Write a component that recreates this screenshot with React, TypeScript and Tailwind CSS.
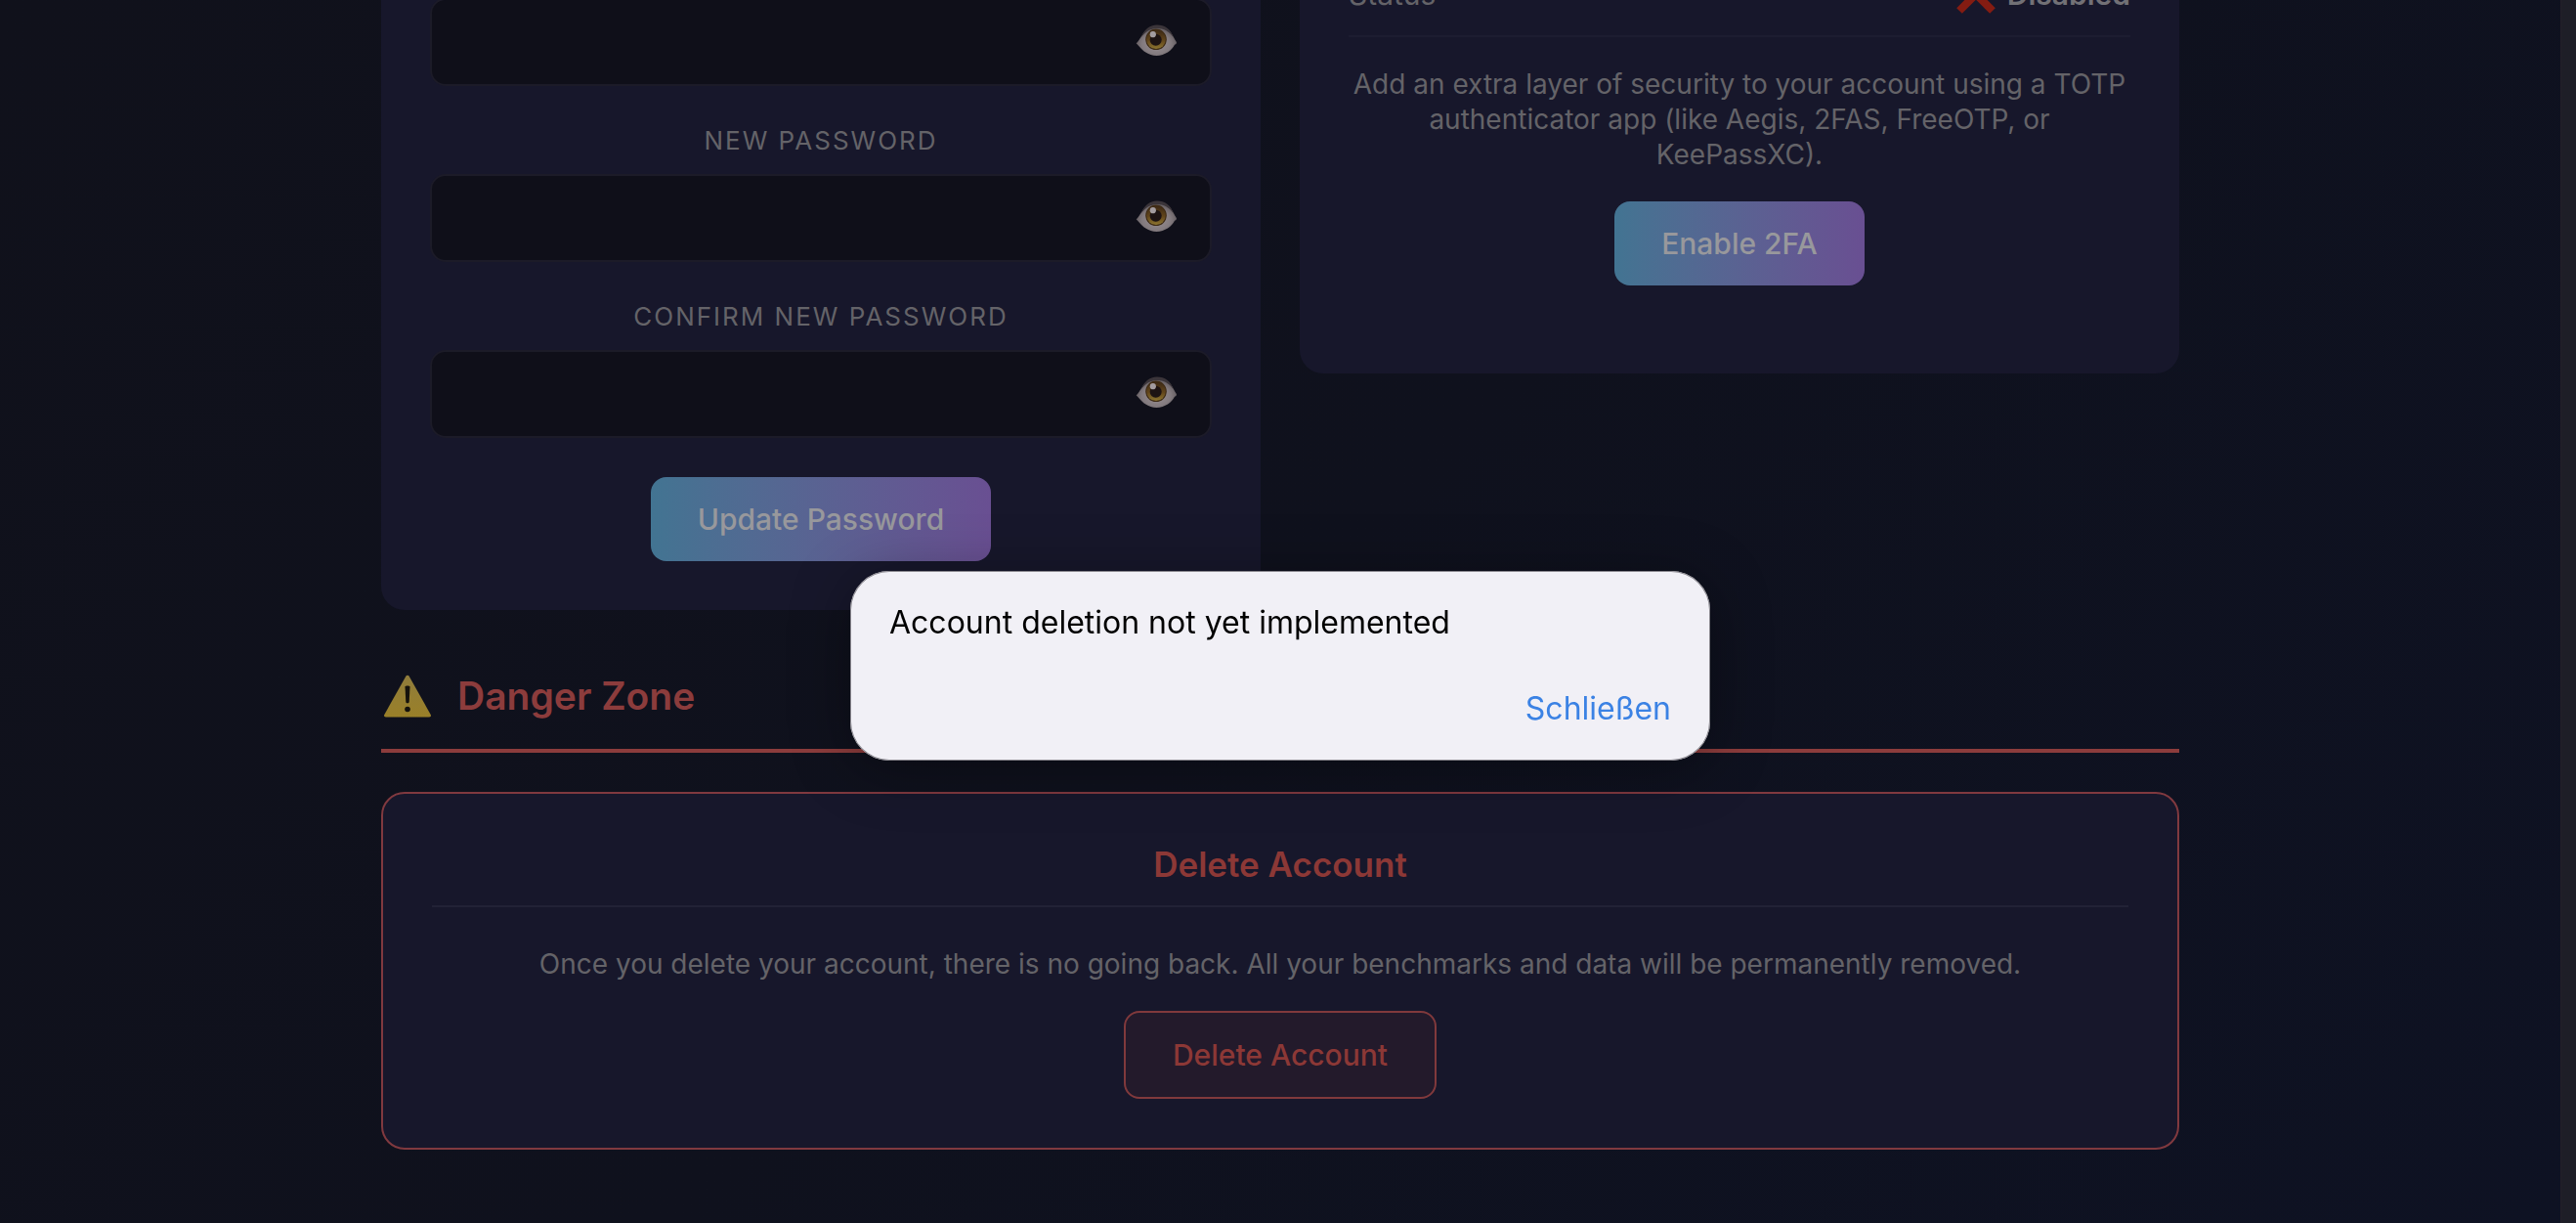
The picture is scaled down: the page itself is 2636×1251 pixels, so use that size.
import { useState } from "react";

const fields = [
  { id: "new_password", label: "New Password" },
  { id: "confirm_password", label: "Confirm New Password" },
];

function EyeIcon() {
  return (
    <svg viewBox="0 0 42 36" className="h-9 w-[42px]" aria-hidden="true">
      <defs>
        <radialGradient id="eyeWhite" cx="0.5" cy="0.6" r="0.55">
          <stop offset="0" stopColor="#9a9094" />
          <stop offset="0.65" stopColor="#827a7e" />
          <stop offset="1" stopColor="#5f585c" />
        </radialGradient>
        <linearGradient id="eyeIris" x1="0" y1="0" x2="0" y2="1">
          <stop offset="0" stopColor="#3c2814" />
          <stop offset="0.55" stopColor="#61451b" />
          <stop offset="1" stopColor="#8d7530" />
        </linearGradient>
      </defs>
      <path
        d="M.7 19.300C4 16.500 6 11 10 7 13.500 3.200 18 1.500 22 1.500c5 0 10 2 13 5.500 3 3.500 4.500 7.500 7 11.300L41.500 20l-1.500.7C37.500 26 30 32 21.500 32 13 32 7.500 27 3.500 22.300Z"
        fill="url(#eyeWhite)"
      />
      <path
        d="M5 14C9 5.500 14 .6 22 .6S36 5 39 13.500C34.500 7 29 4 22 4S10 7.500 5 14Z"
        fill="#3b353a"
      />
      <circle cx="21" cy="15.300" r="10.800" fill="#3f2c16" />
      <circle cx="21" cy="15.300" r="9.700" fill="url(#eyeIris)" />
      <circle cx="20.700" cy="15.700" r="6" fill="#1d1313" />
      <circle cx="17.800" cy="10.200" r="3.100" fill="#a39ca0" />
    </svg>
  );
}

function WarningIcon() {
  return (
    <svg viewBox="-2 0 54 44" className="h-11 w-[54px]" aria-hidden="true">
      <defs>
        <linearGradient id="warnFill" x1="0" y1="0" x2="0" y2="1">
          <stop offset="0" stopColor="#8f7c3c" />
          <stop offset="1" stopColor="#9a8028" />
        </linearGradient>
      </defs>
      <path
        d="M23.300 1.800a2 2 0 0 1 3.400 0L48.700 41c.7 1.300 0 2.400-1.500 2.400H2.800C1.300 43.400.6 42.300 1.300 41Z"
        fill="url(#warnFill)"
      />
      <path
        d="M22.500 12.500c0-1.500 5-1.500 5 0l-.8 15.500c-.1 1.800-3.300 1.800-3.400 0Z"
        fill="#15120c"
      />
      <circle cx="25" cy="35.500" r="2.800" fill="#15120c" />
    </svg>
  );
}

function CrossIcon() {
  return (
    <svg viewBox="0 0 40 40" className="size-10" aria-hidden="true">
      <path d="M3 3 37 37M37 3 3 37" stroke="#841c12" strokeWidth="8" fill="none" />
    </svg>
  );
}

function PasswordInput({ id, ariaLabel }: { id: string; ariaLabel?: string }) {
  const [visible, setVisible] = useState(false);

  return (
    <div className="relative">
      <input
        id={id}
        aria-label={ariaLabel}
        type={visible ? "text" : "password"}
        className="block h-[90px] w-full rounded-2xl border-2 border-[#1c1b28] bg-[#0f0f19] pr-24 pl-6 text-[28px] text-[#8a898e] outline-none"
      />
      <button
        type="button"
        aria-label="Toggle password visibility"
        onClick={() => setVisible(!visible)}
        className="absolute inset-y-0 right-9 flex items-center"
      >
        <EyeIcon />
      </button>
    </div>
  );
}

export default function App() {
  const [open, setOpen] = useState(true);

  return (
    <div className="flex h-screen overflow-hidden bg-[#0f111c] font-['Inter','Liberation_Sans',sans-serif]">
      <div className="flex-1 bg-linear-135 from-[#10111b] via-[#0f111d] to-[#0e1223]">
        {/* page is scrolled, the top of the cards is out of view */}
        <main className="mx-auto -mt-[52px] max-w-[1840px]">
          <div className="grid grid-cols-2 items-start gap-10">
            <form
              onSubmit={(e) => e.preventDefault()}
              className="rounded-3xl bg-[#17172b] p-[50px]"
            >
              <div className="space-y-[38px]">
                <PasswordInput id="current_password" ariaLabel="Current password" />
                {fields.map((field) => (
                  <div key={field.id}>
                    <label
                      htmlFor={field.id}
                      className="mb-4 block text-center text-[26px] leading-9 tracking-[2px] text-[#646368] uppercase"
                    >
                      {field.label}
                    </label>
                    <PasswordInput id={field.id} />
                  </div>
                ))}
              </div>
              <div className="mt-10 flex justify-center">
                <button
                  type="submit"
                  className="rounded-2xl bg-linear-to-r from-[#427492] to-[#694f92] px-12 py-[25px] text-[30px] leading-9 font-medium text-[#98989c]"
                >
                  Update Password
                </button>
              </div>
            </form>

            <section className="rounded-3xl bg-[#17172b] px-[50px] pt-7 pb-[90px] text-center">
              <div className="flex items-center justify-between border-b-2 border-[#1d1d31] pb-6 text-[30px] leading-9 text-[#646368]">
                <span>Status</span>
                <span className="flex h-9 items-center gap-3 font-semibold text-[#727176]">
                  <CrossIcon />
                  Disabled
                </span>
              </div>
              <p className="my-[30px] text-[28px] leading-9 text-[#646368]">
                Add an extra layer of security to your account using a TOTP authenticator app
                (like Aegis, 2FAS, FreeOTP, or KeePassXC).
              </p>
              <button
                type="button"
                className="rounded-2xl bg-linear-to-r from-[#427492] to-[#694f92] px-12 py-[25px] text-[30px] leading-9 font-medium text-[#98989c]"
              >
                Enable 2FA
              </button>
            </section>
          </div>

          <h2 className="mt-16 mb-10 flex items-center gap-6 border-b-4 border-[#8c3c3c] pb-[30px] text-[39px] leading-[48px] font-semibold text-[#8c3c3c]">
            <WarningIcon />
            Danger Zone
          </h2>

          <section className="rounded-3xl border-2 border-[#80393f] bg-[#17172b] p-[50px] text-center">
            <h3 className="border-b-2 border-[#222236] pb-5 text-[35px] leading-[44px] font-semibold text-[#8c3836]">
              Delete Account
            </h3>
            <p className="mt-10 mb-[30px] text-[28px] leading-9 text-[#646368]">
              Once you delete your account, there is no going back. All your benchmarks and data
              will be permanently removed.
            </p>
            <button
              type="button"
              onClick={() => setOpen(true)}
              className="rounded-2xl border-2 border-[#80393c] bg-[#231a2b] px-12 py-[25px] text-[30px] leading-9 font-medium text-[#8c3836]"
            >
              Delete Account
            </button>
          </section>
        </main>
      </div>

      {/* scrollbar track */}
      <div className="w-4 border-l border-[#241f29] bg-[#1e1e27]" />

      {open && (
        <div className="fixed inset-0 flex items-center justify-center pt-[111px] pr-4">
          <div
            role="alertdialog"
            aria-labelledby="alert-text"
            className="w-[880px] rounded-[40px] bg-[#f1f0f6] px-10 py-8 text-[32px] leading-[42px] shadow-[0_8px_60px_rgba(0,0,0,0.35),inset_0_0_0_1px_#8a888f]"
          >
            <p id="alert-text" className="text-black">
              Account deletion not yet implemented
            </p>
            <div className="mt-[46px] flex justify-end">
              <button type="button" onClick={() => setOpen(false)} className="text-[#3b82e4]">
                Schließen
              </button>
            </div>
          </div>
        </div>
      )}
    </div>
  );
}
